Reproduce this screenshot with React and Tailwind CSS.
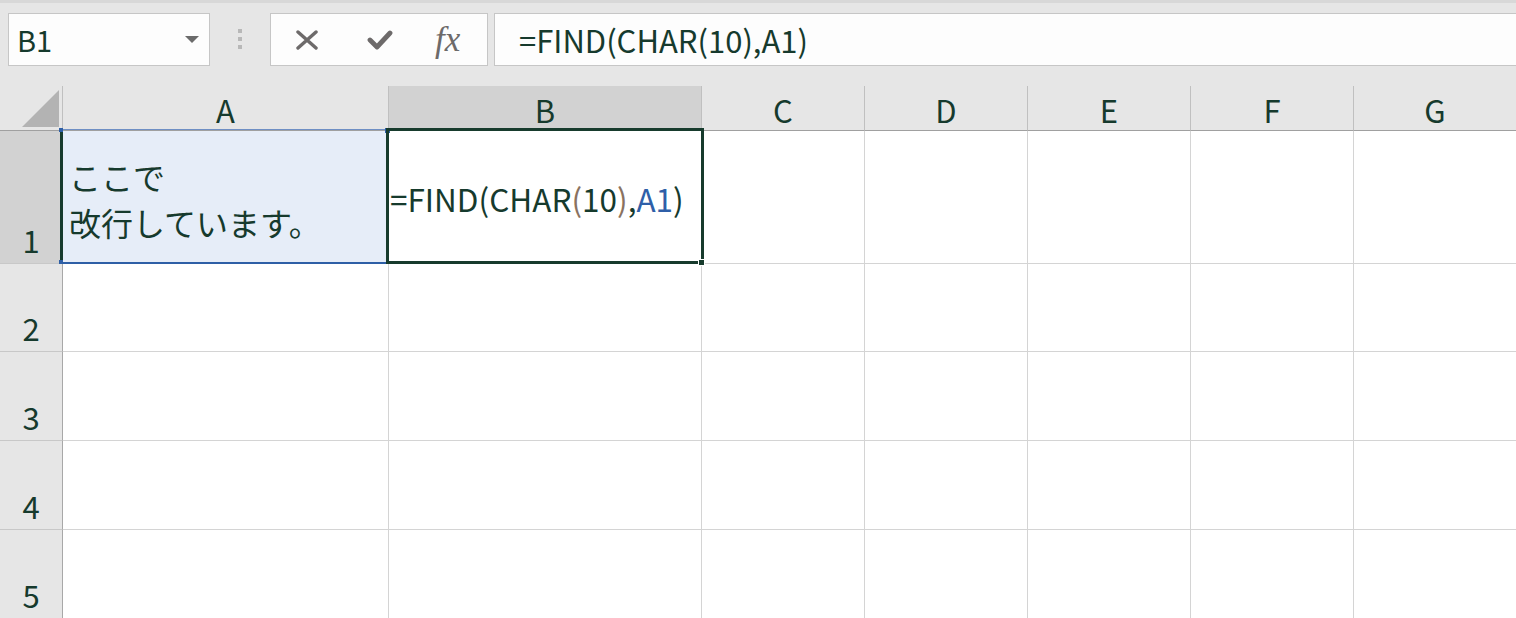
import React from "react";

const COLS = ["A", "B", "C", "D", "E", "F", "G"];
const ROWS = [1, 2, 3, 4, 5];

function NameBox() {
  return (
    <div className="ml-2 flex h-[53px] w-[202px] items-center justify-between border border-[#c6c6c6] bg-[#fdfdfd] pl-2 pr-[10px]">
      <span className="text-[29px] leading-none">B1</span>
      <svg width="14" height="7" viewBox="0 0 14 7">
        <path d="M0 0 H14 L7 7 Z" fill="#6b6b6b" />
      </svg>
    </div>
  );
}

function Grip() {
  return (
    <div className="ml-[28px] mt-[16px] flex flex-col gap-[4px]">
      <span className="block h-[4px] w-[4px] bg-[#b8b8b8]" />
      <span className="block h-[4px] w-[4px] bg-[#b8b8b8]" />
      <span className="block h-[4px] w-[4px] bg-[#b8b8b8]" />
    </div>
  );
}

function FunctionButtons() {
  return (
    <div className="ml-[28px] flex h-[53px] w-[218px] items-center border border-[#c6c6c6] bg-[#fdfdfd] pl-[25px]">
      {/* cancel */}
      <svg width="22" height="20" viewBox="0 0 22 20">
        <path d="M2 2 L20 18 M20 2 L2 18" stroke="#6d6a6a" strokeWidth="3.4" strokeLinecap="round" />
      </svg>
      {/* enter */}
      <svg className="ml-[49px]" width="26" height="21" viewBox="0 0 26 21">
        <path d="M3 11 L10 18 L23 4" stroke="#6d6a6a" strokeWidth="4.8" fill="none" strokeLinecap="round" strokeLinejoin="round" />
      </svg>
      <span className="ml-[42px] font-['Liberation_Serif',serif] text-[35px] italic leading-none text-[#6d6a6a]">
        fx
      </span>
    </div>
  );
}

function FormulaBar() {
  return (
    <div className="ml-[6px] flex h-[53px] flex-1 items-center border border-r-0 border-[#c6c6c6] bg-[#fdfdfd] pl-[24px] text-[31px] leading-none">
      =FIND(CHAR(10),A1)
    </div>
  );
}

function Toolbar() {
  return (
    <div className="flex h-[86px] items-start border-t-[3px] border-[#d8d8d8] bg-[#e6e6e6] pt-[10px]">
      <NameBox />
      <Grip />
      <FunctionButtons />
      <FormulaBar />
    </div>
  );
}

function Corner() {
  return (
    <div className="flex items-end justify-end border-r border-b border-r-[#c0c0c0] border-b-[#a0a0a0] bg-[#e6e6e6] pr-[3px] pb-[3px]">
      <svg width="37" height="37" viewBox="0 0 37 37">
        <path d="M37 0 V37 H0 Z" fill="#b3b3b3" />
      </svg>
    </div>
  );
}

function ColHeader({ label }) {
  const active = label === "B";
  return (
    <div
      className={
        "flex items-center justify-center border-r border-b border-r-[#c0c0c0] border-b-[#a0a0a0] pt-[3px] text-[31px] leading-none " +
        (active ? "bg-[#d2d2d2]" : "bg-[#e6e6e6]")
      }
    >
      {label}
    </div>
  );
}

function RowHeader({ n }) {
  const active = n === 1;
  return (
    <div
      className={
        "flex items-end justify-center border-r border-b border-r-[#a8a8a8] border-b-[#c8c8c8] pb-[8px] text-[31px] leading-none " +
        (active ? "bg-[#d2d2d2]" : "bg-[#e6e6e6]")
      }
    >
      {n}
    </div>
  );
}

function Cell({ col, row }) {
  const base = "border-r border-b border-[#d4d4d4]";
  if (row === 1 && col === "A") {
    return (
      <div className={base + " flex flex-col justify-center bg-[#e6edf8] pl-[6px] pt-[4px] text-[32px] leading-[46px]"}>
        <div>ここで</div>
        <div>改行しています。</div>
      </div>
    );
  }
  if (row === 1 && col === "B") {
    return (
      <div className={base + " flex items-center bg-white pl-[1px] pt-[3px] text-[31.5px] leading-none"}>
        <span>
          =FIND(CHAR<span className="text-[#8a7260]">(</span>10
          <span className="text-[#8a7260]">)</span>,<span className="text-[#2f5fa8]">A1</span>)
        </span>
      </div>
    );
  }
  return <div className={base + " bg-white"} />;
}

export default function App() {
  return (
    <div className="h-[618px] w-[1516px] overflow-hidden bg-white font-['Noto_Sans_CJK_JP',sans-serif] text-[#163a2d]">
      <Toolbar />
      <div className="relative grid grid-cols-[63px_326px_313px_163px_163px_163px_163px_163px] grid-rows-[45px_133px_88px_89px_89px_89px]">
        <Corner />
        {COLS.map((c) => (
          <ColHeader key={c} label={c} />
        ))}
        {ROWS.map((r) => (
          <React.Fragment key={r}>
            <RowHeader n={r} />
            {COLS.map((c) => (
              <Cell key={c + r} col={c} row={r} />
            ))}
          </React.Fragment>
        ))}

        {/* reference highlight around A1 */}
        <div className="pointer-events-none absolute left-[60px] top-[43px] h-[135px] w-[329px] border-t border-b-2 border-l-[3px] border-t-[#6f8fc4] border-b-[#2e5fa6] border-l-[#173b2d]" />
        <span className="absolute left-[59px] top-[42px] h-[4px] w-[4px] bg-[#2e5fa6]" />
        <span className="absolute left-[59px] top-[174px] h-[4px] w-[4px] bg-[#2e5fa6]" />
        <span className="absolute left-[385px] top-[42px] h-[5px] w-[5px] bg-[#2e5fa6]" />

        {/* active cell B1 */}
        <div className="pointer-events-none absolute left-[386px] top-[42px] h-[136px] w-[318px] border-[3px] border-[#173b2d]" />
        <span className="absolute left-[698px] top-[173px] h-[7px] w-[7px] border border-white bg-[#173b2d]" />
      </div>
    </div>
  );
}
